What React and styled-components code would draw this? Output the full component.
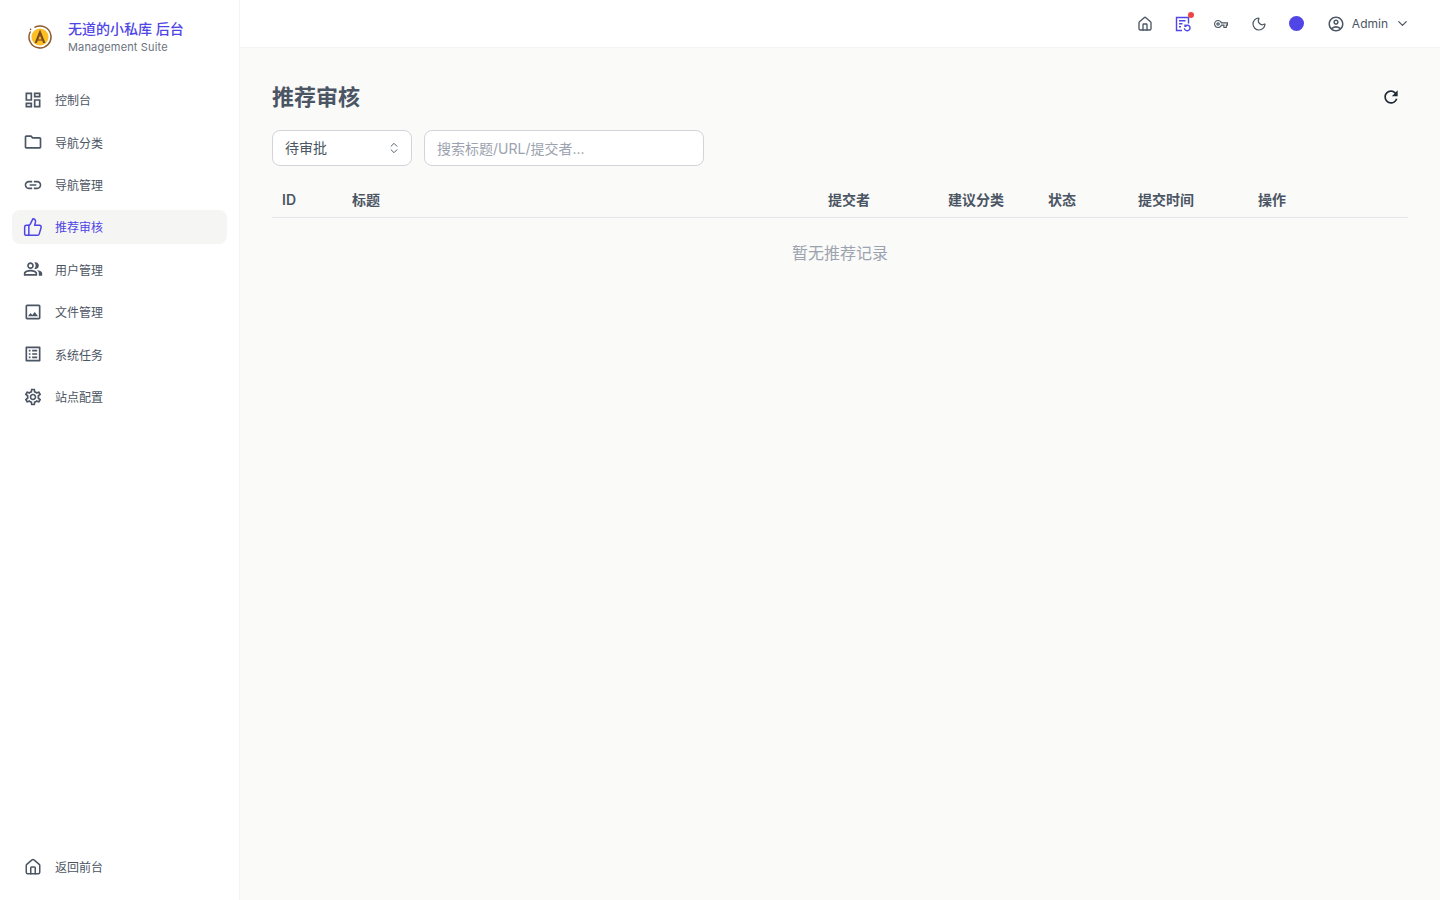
import styled, { createGlobalStyle } from 'styled-components';
import {
  MdOutlineDashboard,
  MdOutlineFolder,
  MdLink,
  MdOutlinePeopleAlt,
  MdOutlineImage,
  MdOutlineListAlt,
  MdOutlineSettings,
  MdOutlineVpnKey,
  MdOutlineAccountCircle,
  MdRefresh,
} from 'react-icons/md';
import { Home, Moon, ChevronDown, ChevronsUpDown, ThumbsUp } from 'lucide-react';

const GlobalStyle = createGlobalStyle`
  * { box-sizing: border-box; }
  html, body { margin: 0; height: 100%; }
  body {
    font-family: Inter, "Noto Sans CJK SC", sans-serif;
    background: #fafaf9;
    color: #4b5563;
  }
`;

const navItems = [
  { label: '控制台', icon: <MdOutlineDashboard size={20} /> },
  { label: '导航分类', icon: <MdOutlineFolder size={20} /> },
  { label: '导航管理', icon: <MdLink size={20} /> },
  { label: '推荐审核', icon: <ThumbsUp size={20} strokeWidth={1.8} />, active: true },
  { label: '用户管理', icon: <MdOutlinePeopleAlt size={20} /> },
  { label: '文件管理', icon: <MdOutlineImage size={20} /> },
  { label: '系统任务', icon: <MdOutlineListAlt size={20} /> },
  { label: '站点配置', icon: <MdOutlineSettings size={20} /> },
];

const columns = [
  { label: 'ID', width: 70, latin: true },
  { label: '标题', width: 476 },
  { label: '提交者', width: 120 },
  { label: '建议分类', width: 100 },
  { label: '状态', width: 90 },
  { label: '提交时间', width: 120 },
  { label: '操作', width: 160 },
];

const Logo = () => (
  <svg width="26" height="26" viewBox="0 0 26 26" fill="none">
    <path d="M8 3.2A11 11 0 1 1 3.2 8" stroke="#8a5a2b" strokeWidth="1.5" strokeLinecap="round" />
    <circle cx="3.6" cy="5.4" r="0.8" fill="#8a5a2b" />
    <circle cx="13" cy="13" r="8.6" fill="#fbbf24" />
    <path d="M13 5.5L7.6 19h2.2l3.2-7.6 3.2 7.6h2.2z" fill="#7c4a1e" />
    <path d="M10.6 16h4.8" stroke="#7c4a1e" strokeWidth="1.2" />
  </svg>
);

const ReviewIcon = () => (
  <svg width="16" height="16" viewBox="0 0 16 16" fill="none" stroke="#4f46e5" strokeWidth="1.4">
    <path d="M7 14.5H1.5v-13h12v6" />
    <path d="M4 4.8h6.5M4 7.8h3.5M4 10.8h2" />
    <path d="M9.4 12.2a2.8 2.8 0 1 0 1-2.4M10 8.6v1.6h1.6" />
  </svg>
);

export default function App() {
  return (
    <Layout>
      <GlobalStyle />
      <Sidebar>
        <Brand>
          <Logo />
          <BrandText>
            <BrandName>无道的小私库 后台</BrandName>
            <BrandSub>Management Suite</BrandSub>
          </BrandText>
        </Brand>
        <Nav>
          {navItems.map((item) => (
            <NavItem key={item.label} $active={item.active}>
              {item.icon}
              <span>{item.label}</span>
            </NavItem>
          ))}
        </Nav>
        <SidebarFooter>
          <NavItem>
            <Home size={18} strokeWidth={2} />
            <span>返回前台</span>
          </NavItem>
        </SidebarFooter>
      </Sidebar>
      <Main>
        <Header>
          <HeaderIcon>
            <Home size={16} strokeWidth={2} />
          </HeaderIcon>
          <HeaderIcon>
            <ReviewIcon />
            <Dot />
          </HeaderIcon>
          <HeaderIcon>
            <MdOutlineVpnKey size={14} />
          </HeaderIcon>
          <HeaderIcon>
            <Moon size={16} strokeWidth={1.8} />
          </HeaderIcon>
          <HeaderIcon>
            <ThemeSwatch />
          </HeaderIcon>
          <UserMenu>
            <MdOutlineAccountCircle size={18} />
            <span>Admin</span>
            <ChevronDown size={15} strokeWidth={2} />
          </UserMenu>
        </Header>
        <Content>
          <TitleRow>
            <Title>推荐审核</Title>
            <RefreshButton>
              <MdRefresh size={20} />
            </RefreshButton>
          </TitleRow>
          <Filters>
            <Select>
              <SelectValue>待审批</SelectValue>
              <ChevronsUpDown size={14} strokeWidth={1.6} />
            </Select>
            <Search placeholder="搜索标题/URL/提交者..." />
          </Filters>
          <Table>
            <colgroup>
              {columns.map((col) => (
                <col key={col.label} width={col.width} />
              ))}
            </colgroup>
            <thead>
              <tr>
                {columns.map((col) => (
                  <Th key={col.label} $latin={col.latin}>
                    {col.label}
                  </Th>
                ))}
              </tr>
            </thead>
            <tbody>
              <tr>
                <Empty colSpan={columns.length}>暂无推荐记录</Empty>
              </tr>
            </tbody>
          </Table>
        </Content>
      </Main>
    </Layout>
  );
}

const Layout = styled.div`
  display: flex;
  height: 100vh;
  overflow: hidden;
`;

const Sidebar = styled.aside`
  width: 240px;
  flex-shrink: 0;
  display: flex;
  flex-direction: column;
  background: #fff;
  border-right: 1px solid #f3f4f6;
  padding: 0 12px 16px;
`;

const Brand = styled.div`
  display: flex;
  align-items: center;
  gap: 15px;
  height: 74px;
  padding: 0 15px;
`;

const BrandText = styled.div`
  display: flex;
  flex-direction: column;
  gap: 1px;
`;

const BrandName = styled.div`
  font-size: 14px;
  font-weight: 500;
  line-height: 20px;
  color: #4f46e5;
`;

const BrandSub = styled.div`
  font-size: 11px;
  line-height: 15px;
  letter-spacing: 0.15px;
  color: #6b7280;
`;

const Nav = styled.nav`
  display: flex;
  flex-direction: column;
  gap: 8px;
  padding-top: 8.6px;
`;

const NavItem = styled.a`
  display: flex;
  align-items: center;
  gap: 12px;
  height: 34.4px;
  padding: 0 11px;
  border-radius: 8px;
  font-size: 12px;
  cursor: pointer;
  color: ${(props) => (props.$active ? '#4f46e5' : '#4b5563')};
  background: ${(props) => (props.$active ? '#f5f5f4' : 'transparent')};

  svg {
    width: 20px;
    flex-shrink: 0;
  }
`;

const SidebarFooter = styled.div`
  margin-top: auto;
`;

const Main = styled.div`
  flex: 1;
  min-width: 0;
  display: flex;
  flex-direction: column;
`;

const Header = styled.header`
  height: 48px;
  flex-shrink: 0;
  display: flex;
  align-items: center;
  justify-content: flex-end;
  gap: 22px;
  padding: 0 30px 0 0;
  background: #fff;
  border-bottom: 1px solid #f3f4f6;
`;

const HeaderIcon = styled.div`
  position: relative;
  width: 16px;
  height: 16px;
  display: flex;
  align-items: center;
  justify-content: center;
  color: #4b5563;
`;

const Dot = styled.span`
  position: absolute;
  top: -4px;
  right: -3px;
  width: 6px;
  height: 6px;
  border-radius: 50%;
  background: #ef4444;
`;

const ThemeSwatch = styled.span`
  width: 15px;
  height: 15px;
  border-radius: 50%;
  background: #4f46e5;
`;

const UserMenu = styled.div`
  display: flex;
  align-items: center;
  gap: 7px;
  font-size: 12px;
  color: #4b5563;
`;

const Content = styled.main`
  flex: 1;
  padding: 32px;
`;

const TitleRow = styled.div`
  display: flex;
  align-items: center;
  justify-content: space-between;
  height: 34px;
  margin-bottom: 16px;
`;

const Title = styled.h1`
  margin: 0 0 4px;
  font-size: 22px;
  font-weight: 600;
  color: #4b5563;
`;

const RefreshButton = styled.button`
  display: flex;
  align-items: center;
  justify-content: center;
  width: 34px;
  height: 34px;
  padding: 0;
  border: 0;
  background: transparent;
  color: #1f2937;
  cursor: pointer;
`;

const Filters = styled.div`
  display: flex;
  gap: 12px;
  margin-bottom: 15px;
`;

const Select = styled.div`
  width: 140px;
  height: 36px;
  display: flex;
  align-items: center;
  justify-content: space-between;
  padding: 0 10px 0 12px;
  background: #fff;
  border: 1px solid #d1d5db;
  border-radius: 8px;
  font-size: 14px;
  color: #4b5563;
`;

const SelectValue = styled.span`
  margin-bottom: 2px;
`;

const Search = styled.input`
  width: 280px;
  height: 36px;
  padding: 0 12px;
  background: #fff;
  border: 1px solid #d1d5db;
  border-radius: 8px;
  outline: none;
  font: inherit;
  font-size: 14px;

  &::placeholder {
    color: #9ca3af;
  }
`;

const Table = styled.table`
  width: 100%;
  table-layout: fixed;
  border-collapse: collapse;
`;

const Th = styled.th`
  height: 36px;
  padding: ${(props) => (props.$latin ? '2px' : '0')} 10px 0;
  text-align: left;
  font-size: 14px;
  font-weight: 600;
  color: #4b5563;
  border-bottom: 1px solid #e5e7eb;
`;

const Empty = styled.td`
  height: 70px;
  text-align: center;
  vertical-align: top;
  padding-top: 22px;
  font-size: 16px;
  color: #9ca3af;
`;
